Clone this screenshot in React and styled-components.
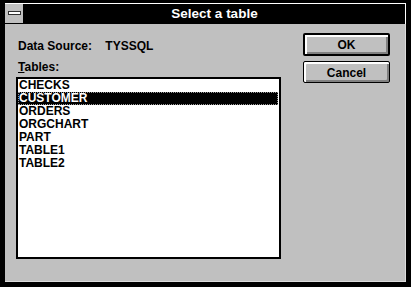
import styled, { createGlobalStyle } from "styled-components";

const GlobalStyle = createGlobalStyle`
  html, body {
    margin: 0;
    padding: 0;
    background: #000;
  }
  * {
    box-sizing: border-box;
  }
`;

const Frame = styled.div`
  width: 411px;
  height: 287px;
  background-color: #000;
  padding: 3px 5px 5px 5px;
  display: flex;
  flex-direction: column;
  font-family: "Liberation Sans", Arial, sans-serif;
  font-weight: bold;
  font-size: 12px;
`;

const TitleBar = styled.div`
  height: 21px;
  display: flex;
  border-top: 1px solid #fff;
  border-right: 1px solid #fff;
  background-color: #000;
`;

const SysMenu = styled.div`
  width: 19px;
  height: 20px;
  background-color: #c0c0c0;
  border-right: 1px solid #000;
  border-bottom: 1px solid #000;
  display: flex;
  align-items: center;
  justify-content: center;
`;

const SysBar = styled.div`
  width: 13px;
  height: 4px;
  background-color: #fff;
  border: 1px solid #303030;
  margin-bottom: 1px;
`;

const Title = styled.div`
  flex: 1;
  color: #fff;
  font-size: 13.5px;
  line-height: 19px;
  text-align: center;
`;

const Client = styled.div`
  flex: 1;
  background-color: #c0c0c0;
  border-right: 1px solid #dcdcdc;
  border-bottom: 1px solid #dcdcdc;
  display: flex;
  gap: 22px;
  padding: 0 15px 0 11px;
`;

const LeftSide = styled.div`
  width: 266px;
  padding-top: 15px;
  display: flex;
  flex-direction: column;
`;

const Label = styled.div`
  line-height: 14px;
  padding-left: 2px;
  margin-bottom: ${(p) => p.$gap}px;
  white-space: pre;
`;

const ListBox = styled.div`
  height: 182px;
  background-color: #fff;
  border: 2px solid #000;
  padding: 0 1px 0 0;
`;

const Item = styled.div`
  height: 13px;
  line-height: 13px;
  padding-left: 1px;
  color: ${(p) => (p.$selected ? "#fff" : "#000")};
  background-color: ${(p) => (p.$selected ? "#000" : "transparent")};
  outline: ${(p) => (p.$selected ? "1px dotted #9a9a9a" : "none")};
  outline-offset: -1px;
`;

const RightSide = styled.div`
  padding-top: 9px;
  display: flex;
  flex-direction: column;
  gap: 5px;
`;

const Button = styled.div`
  width: 87px;
  height: ${(p) => (p.$default ? 23 : 22)}px;
  border: ${(p) => (p.$default ? 2 : 1)}px solid #000;
  border-radius: 2px;
  background-color: #c0c0c0;
  box-shadow: inset 2px 2px 0 #fff, inset -2px -2px 0 #808080;
  display: flex;
  align-items: center;
  justify-content: center;
  color: #000;
  padding-top: 1px;
`;

const tables = ["CHECKS", "CUSTOMER", "ORDERS", "ORGCHART", "PART", "TABLE1", "TABLE2"];

function App() {
  return (
    <>
      <GlobalStyle />
      <Frame>
        <TitleBar>
          <SysMenu>
            <SysBar />
          </SysMenu>
          <Title>Select a table</Title>
        </TitleBar>

        <Client>
          <LeftSide>
            <Label $gap={7}>{"Data Source:    TYSSQL"}</Label>
            <Label $gap={3}>
              <u>T</u>ables:
            </Label>
            <ListBox>
              {tables.map((t) => (
                <Item key={t} $selected={t === "CUSTOMER"}>
                  {t}
                </Item>
              ))}
            </ListBox>
          </LeftSide>

          <RightSide>
            <Button $default>OK</Button>
            <Button>Cancel</Button>
          </RightSide>
        </Client>
      </Frame>
    </>
  );
}

export default App;
